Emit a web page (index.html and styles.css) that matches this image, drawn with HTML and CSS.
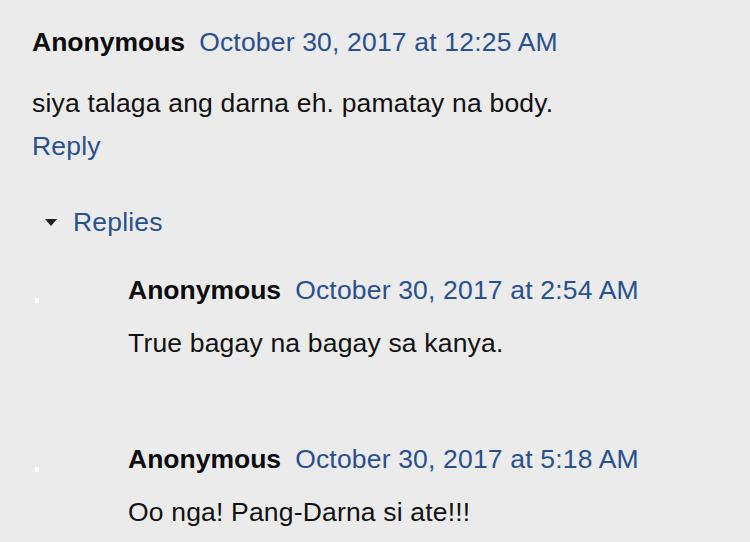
FILE: index.html
```html
<!DOCTYPE html>
<html lang="tl">
<head>
    <meta charset="UTF-8">
    <meta name="viewport" content="width=device-width, initial-scale=1.0">
    <title>Comments</title>
    <link rel="stylesheet" href="styles.css">
</head>
<body>

<div class="comment-thread">
    <div class="comment">
        <div class="comment-header">
            <span class="user">Anonymous</span>
            <a class="datetime" href="#">October 30, 2017 at 12:25 AM</a>
        </div>
        <p class="comment-content">siya talaga ang darna eh. pamatay na body.</p>
        <div class="comment-actions">
            <a href="#">Reply</a>
        </div>
    </div>

    <div class="thread-toggle">
        <span class="thread-arrow"></span>
        <a href="#">Replies</a>
    </div>

    <div class="replies">
        <div class="reply">
            <div class="avatar"><span class="avatar-dot"></span></div>
            <div class="reply-main">
                <div class="comment-header">
                    <span class="user">Anonymous</span>
                    <a class="datetime" href="#">October 30, 2017 at 2:54 AM</a>
                </div>
                <p class="comment-content">True bagay na bagay sa kanya.</p>
            </div>
        </div>
        <div class="reply">
            <div class="avatar"><span class="avatar-dot"></span></div>
            <div class="reply-main">
                <div class="comment-header">
                    <span class="user">Anonymous</span>
                    <a class="datetime" href="#">October 30, 2017 at 5:18 AM</a>
                </div>
                <p class="comment-content">Oo nga! Pang-Darna si ate!!!</p>
            </div>
        </div>
    </div>
</div>

</body>
</html>
```

FILE: styles.css
```css
/* Estilos básicos */
body {
    margin: 0;
    background-color: #ebebeb;
    font-family: 'Liberation Sans', Arial, sans-serif;
    font-size: 26.5px;
    letter-spacing: 0.18px;
    color: #111;
    overflow: hidden;
}
a {
    color: #2a508c;
    text-decoration: none;
}
.comment-thread {
    padding: 21px 0 0 32px;
}
.comment-header {
    display: flex;
    align-items: baseline;
    line-height: 42px;
    white-space: nowrap;
}
.user {
    font-weight: bold;
    letter-spacing: 0;
    color: #0c0c0c;
    margin-right: 14px;
}
.comment-content {
    margin: 19px 0 0;
    line-height: 42px;
}
.comment-actions {
    margin-top: 1px;
    line-height: 42px;
}

/* Respuestas */
.thread-toggle {
    display: flex;
    align-items: center;
    margin-top: 34px;
    padding-left: 13px;
    line-height: 42px;
}
.thread-arrow {
    width: 0;
    height: 0;
    border-left: 6px solid transparent;
    border-right: 6px solid transparent;
    border-top: 7px solid #1e1e1e;
    margin-right: 16px;
    margin-top: 1px;
}
.replies {
    margin-top: 26px;
}
.reply {
    display: flex;
}
.reply + .reply {
    margin-top: 74px;
}
.avatar {
    width: 96px;
    flex-shrink: 0;
}
.avatar-dot {
    display: block;
    width: 4px;
    height: 5px;
    margin: 29px 0 0 3px;
    background: #fff;
}
.reply .comment-content {
    margin-top: 11px;
}
```
